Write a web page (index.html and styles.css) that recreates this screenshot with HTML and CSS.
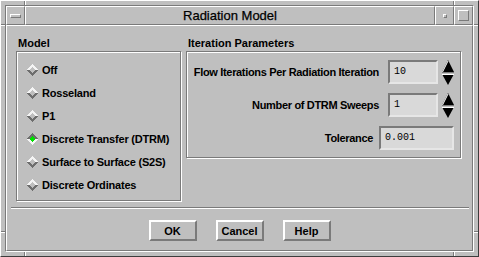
FILE: index.html
```html
<!DOCTYPE html>
<html lang="en">
<head>
    <meta charset="UTF-8">
    <title>Radiation Model</title>
    <link rel="stylesheet" href="styles.css">
</head>
<body>

    <div class="window">
        <div class="frame">
            <div class="titlebar">
                <div class="tb-btn"><span class="menu-bar"></span></div>
                <div class="tb-title">Radiation Model</div>
                <div class="tb-btn"><span class="min-box"></span></div>
                <div class="tb-btn"><span class="max-box"></span></div>
            </div>

            <div class="client">
                <div class="panels">
                    <div class="group group-model">
                        <div class="group-label">Model</div>
                        <div class="group-box model-box">
                            <div class="radio">
                                <svg class="dia" width="12" height="12" viewBox="0 0 12 12"><polygon class="hi" points="0,6 6,0 12,6"/><polygon class="lo" points="0,6 6,12 12,6"/><polygon class="in" points="3,6 6,3 9,6 6,9"/></svg>
                                Off
                            </div>
                            <div class="radio">
                                <svg class="dia" width="12" height="12" viewBox="0 0 12 12"><polygon class="hi" points="0,6 6,0 12,6"/><polygon class="lo" points="0,6 6,12 12,6"/><polygon class="in" points="3,6 6,3 9,6 6,9"/></svg>
                                Rosseland
                            </div>
                            <div class="radio">
                                <svg class="dia" width="12" height="12" viewBox="0 0 12 12"><polygon class="hi" points="0,6 6,0 12,6"/><polygon class="lo" points="0,6 6,12 12,6"/><polygon class="in" points="3,6 6,3 9,6 6,9"/></svg>
                                P1
                            </div>
                            <div class="radio selected">
                                <svg class="dia" width="12" height="12" viewBox="0 0 12 12"><polygon class="hi" points="0,6 6,0 12,6"/><polygon class="lo" points="0,6 6,12 12,6"/><polygon class="in" points="3,6 6,3 9,6 6,9"/></svg>
                                Discrete Transfer (DTRM)
                            </div>
                            <div class="radio">
                                <svg class="dia" width="12" height="12" viewBox="0 0 12 12"><polygon class="hi" points="0,6 6,0 12,6"/><polygon class="lo" points="0,6 6,12 12,6"/><polygon class="in" points="3,6 6,3 9,6 6,9"/></svg>
                                Surface to Surface (S2S)
                            </div>
                            <div class="radio">
                                <svg class="dia" width="12" height="12" viewBox="0 0 12 12"><polygon class="hi" points="0,6 6,0 12,6"/><polygon class="lo" points="0,6 6,12 12,6"/><polygon class="in" points="3,6 6,3 9,6 6,9"/></svg>
                                Discrete Ordinates
                            </div>
                        </div>
                    </div>

                    <div class="group group-iter">
                        <div class="group-label">Iteration Parameters</div>
                        <div class="group-box iter-box">
                            <div class="row">
                                <span class="row-label">Flow Iterations Per Radiation Iteration</span>
                                <div class="field">10</div>
                                <svg class="spin" width="12" height="25" viewBox="0 0 12 25"><polygon points="6,0 12,12 0,12" fill="#000"/><line x1="0.5" y1="12" x2="6" y2="1" stroke="#fff"/><line x1="0" y1="12.5" x2="12" y2="12.5" stroke="#7a7a7a"/><polygon points="0,14 12,14 6,25" fill="#000"/><line x1="0" y1="14.5" x2="12" y2="14.5" stroke="#fff"/></svg>
                            </div>
                            <div class="row">
                                <span class="row-label">Number of DTRM Sweeps</span>
                                <div class="field">1</div>
                                <svg class="spin" width="12" height="25" viewBox="0 0 12 25"><polygon points="6,0 12,12 0,12" fill="#000"/><line x1="0.5" y1="12" x2="6" y2="1" stroke="#fff"/><line x1="0" y1="12.5" x2="12" y2="12.5" stroke="#7a7a7a"/><polygon points="0,14 12,14 6,25" fill="#000"/><line x1="0" y1="14.5" x2="12" y2="14.5" stroke="#fff"/></svg>
                            </div>
                            <div class="row row-tol">
                                <span class="row-label">Tolerance</span>
                                <div class="field field-wide">0.001</div>
                            </div>
                        </div>
                    </div>
                </div>

                <div class="separator"></div>

                <div class="buttons">
                    <div class="btn">OK</div>
                    <div class="btn">Cancel</div>
                    <div class="btn">Help</div>
                </div>
            </div>
        </div>
    </div>

</body>
</html>
```

FILE: styles.css
```css
body {
    margin: 0;
    background: #bfbfbf;
    font-family: 'Liberation Sans', Arial, sans-serif;
    color: #000;
}

/* window manager frame, with the resize corner notches */
.window {
    width: 479px;
    height: 257px;
    box-sizing: border-box;
    border: 1px solid;
    border-color: #fff #3c3c3c #3c3c3c #fff;
    padding: 4px;
    background:
        linear-gradient(#7a7a7a, #7a7a7a) 24px 0 / 1px 100% no-repeat,
        linear-gradient(#fff, #fff) 25px 0 / 1px 100% no-repeat,
        linear-gradient(#7a7a7a, #7a7a7a) 453px 0 / 1px 100% no-repeat,
        linear-gradient(#fff, #fff) 454px 0 / 1px 100% no-repeat,
        linear-gradient(#7a7a7a, #7a7a7a) 0 24px / 100% 1px no-repeat,
        linear-gradient(#fff, #fff) 0 25px / 100% 1px no-repeat,
        linear-gradient(#7a7a7a, #7a7a7a) 0 231px / 100% 1px no-repeat,
        linear-gradient(#fff, #fff) 0 232px / 100% 1px no-repeat,
        #bfbfbf;
    background-origin: border-box;
}

.frame {
    height: 100%;
    box-sizing: border-box;
    border: 1px solid;
    border-color: #7a7a7a #fff #fff #7a7a7a;
    background: #bfbfbf;
    display: flex;
    flex-direction: column;
}

.titlebar {
    display: flex;
    height: 19px;
}

.tb-btn,
.tb-title {
    box-sizing: border-box;
    border: 1px solid;
    border-color: #fff #7a7a7a #7a7a7a #fff;
    display: flex;
    align-items: center;
    justify-content: center;
}

.tb-btn {
    width: 19px;
}

.tb-title {
    flex: 1;
    font-size: 13px;
    -webkit-text-stroke: 0.25px #000;
}

.menu-bar {
    width: 11px;
    height: 4px;
    box-sizing: border-box;
    border: 1px solid;
    border-color: #fff #7a7a7a #7a7a7a #fff;
}

.min-box {
    width: 4px;
    height: 4px;
    box-sizing: border-box;
    border: 1px solid;
    border-color: #fff #7a7a7a #7a7a7a #fff;
}

.max-box {
    width: 11px;
    height: 11px;
    box-sizing: border-box;
    border: 1px solid;
    border-color: #fff #7a7a7a #7a7a7a #fff;
}

.client {
    height: 226px;
    box-sizing: border-box;
    border: 1px solid;
    border-color: #fff #7a7a7a #7a7a7a #fff;
    padding-top: 10px;
}

.panels {
    display: flex;
    gap: 5px;
    padding-left: 9px;
}

.group-label {
    height: 14px;
    line-height: 14px;
    padding-left: 2px;
    margin-bottom: 1px;
    font-size: 11px;
    font-weight: bold;
}

.group-box {
    box-sizing: border-box;
    border: 1px solid #7a7a7a;
    box-shadow: inset 1px 1px #fff, 1px 1px #fff;
}

.group-model {
    width: 165px;
}

.model-box {
    height: 150px;
    padding: 6px 0 0 9px;
}

.radio {
    display: flex;
    align-items: center;
    gap: 4px;
    height: 23px;
    font-size: 11px;
    font-weight: bold;
    letter-spacing: -0.2px;
}

.dia {
    shape-rendering: crispEdges;
}

.dia .hi { fill: #f4f4f4; }
.dia .lo { fill: #6e6e6e; }
.dia .in { fill: #bfbfbf; }

.radio.selected .hi { fill: #6e6e6e; }
.radio.selected .lo { fill: #f4f4f4; }
.radio.selected .in { fill: #00e000; }

.group-iter {
    width: 275px;
}

.iter-box {
    height: 107px;
    padding: 8px 6px 0 0;
    display: flex;
    flex-direction: column;
    gap: 9px;
}

.row {
    display: flex;
    align-items: center;
    justify-content: flex-end;
    height: 24px;
    font-size: 11px;
    font-weight: bold;
    letter-spacing: -0.33px;
}

.row-label {
    margin-right: 9px;
}

.row-tol .row-label {
    margin-right: 6px;
}

.field {
    width: 50px;
    height: 24px;
    box-sizing: border-box;
    border: 2px solid;
    border-color: #7a7a7a #e6e6e6 #e6e6e6 #7a7a7a;
    background: #d9d9d9;
    padding-left: 4px;
    color: #000;
    font-family: 'Liberation Mono', monospace;
    font-size: 10px;
    font-weight: normal;
    letter-spacing: 0;
    line-height: 20px;
}

.field-wide {
    width: 75px;
}

.spin {
    margin-left: 4px;
}

.separator {
    height: 2px;
    box-sizing: border-box;
    margin: 6px 3px 0 4px;
    border-top: 1px solid #7a7a7a;
    border-bottom: 1px solid #fff;
}

.buttons {
    display: flex;
    justify-content: center;
    gap: 19px;
    margin-top: 11px;
}

.btn {
    width: 48px;
    height: 21px;
    box-sizing: border-box;
    border: 2px solid;
    border-color: #fff #7a7a7a #7a7a7a #fff;
    display: flex;
    align-items: center;
    justify-content: center;
    font-size: 11px;
    font-weight: bold;
}
```
